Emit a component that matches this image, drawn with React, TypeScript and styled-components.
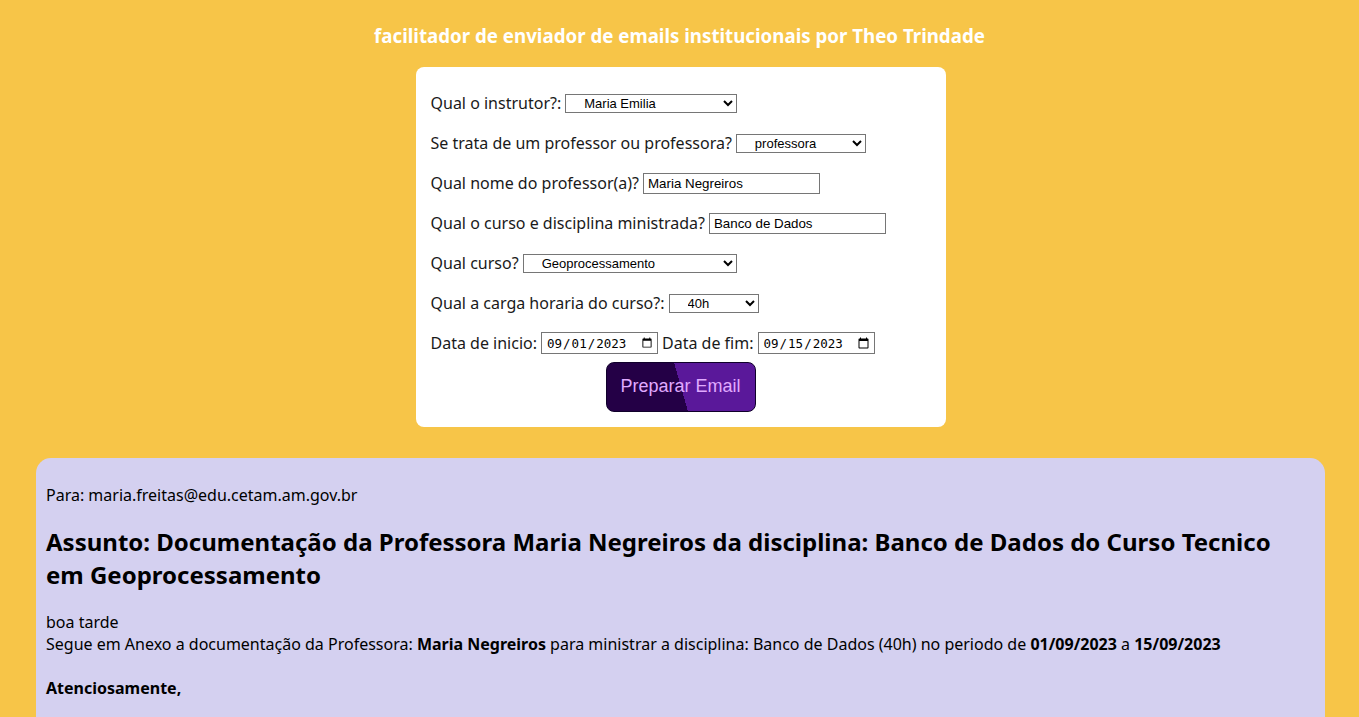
import React from "react";
import styled, { createGlobalStyle } from "styled-components";

const Global = createGlobalStyle`
  html, body {
    margin: 0;
    padding: 0;
    background: #f7c548;
    font-family: "Noto Sans", "Open Sans", sans-serif;
    color: #111;
  }
`;

const Page = styled.div`
  display: flex;
  flex-direction: column;
  align-items: center;
  padding-top: 23px;
`;

const Title = styled.h1`
  margin: 0 0 18px;
  font-size: 18.72px;
  line-height: 26px;
  font-weight: 700;
  color: #ffffff;
  text-align: center;
`;

const Card = styled.form`
  width: 530px;
  box-sizing: border-box;
  margin-left: 2px;
  background: #ffffff;
  border-radius: 8px;
  padding: 24px 15px 15px;
  display: flex;
  flex-direction: column;
  gap: 16px;
`;

const Row = styled.div`
  display: flex;
  align-items: center;
  height: 24px;
  font-size: 16px;
  color: #1a1a1a;
  white-space: nowrap;
`;

const Label = styled.label`
  margin-right: 4px;
`;

const Select = styled.select<{ $w: number }>`
  width: ${(p) => p.$w}px;
  height: 19px;
  box-sizing: border-box;
  font-family: Arial, "Liberation Sans", sans-serif;
  font-size: 13px;
  color: #000;
  padding: 0 0 0 14px;
  border: 1px solid #767676;
  border-radius: 0;
  background: #fff;
`;

const TextInput = styled.input<{ $w: number }>`
  width: ${(p) => p.$w}px;
  height: 21px;
  box-sizing: border-box;
  font-family: Arial, "Liberation Sans", sans-serif;
  font-size: 13.33px;
  padding: 1px 4px;
  border: 1px solid #767676;
  border-radius: 0;
  color: #000;
`;

const DateInput = styled.input`
  width: 117px;
  height: 22px;
  box-sizing: border-box;
  font-family: "DejaVu Sans Mono", "Liberation Mono", monospace;
  font-size: 12.5px;
  padding: 1px 2px 1px 4px;
  border: 1px solid #767676;
  border-radius: 0;
  color: #000;
  margin-right: 4px;
`;

const ButtonRow = styled.div`
  display: flex;
  justify-content: center;
  margin-top: -9px;
`;

const Button = styled.button`
  width: 150px;
  height: 50px;
  padding: 0 0 2px;
  border-radius: 8px;
  border: 1px solid #10002b;
  background: linear-gradient(74deg, #240046 50%, #5a189a 50%);
  color: #e0aaff;
  font-family: Arial, "Liberation Sans", sans-serif;
  font-size: 18px;
  cursor: pointer;
`;

const Panel = styled.section`
  align-self: flex-start;
  margin: 31px 0 0 36px;
  width: 1289px;
  box-sizing: border-box;
  background: #d4d0f0;
  border-radius: 15px;
  padding: 10px 40px 20px 10px;
  color: #000;
`;

const To = styled.p`
  margin: 16px 0;
  font-size: 16px;
`;

const Subject = styled.h2`
  margin: 19px 0 20px;
  font-size: 24px;
  font-weight: 700;
`;

const Body = styled.p`
  margin: 20px 0 16px;
  font-size: 16px;
`;

export default function App() {
  return (
    <>
      <Global />
      <Page>
        <Title>facilitador de enviador de emails institucionais por Theo Trindade</Title>
        <Card onSubmit={(e) => e.preventDefault()}>
          <Row>
            <Label>Qual o instrutor?:</Label>
            <Select $w={172} defaultValue="Maria Emilia">
              <option>Maria Emilia</option>
            </Select>
          </Row>
          <Row>
            <Label>Se trata de um professor ou professora?</Label>
            <Select $w={130} defaultValue="professora">
              <option>professor</option>
              <option>professora</option>
            </Select>
          </Row>
          <Row>
            <Label>Qual nome do professor(a)?</Label>
            <TextInput $w={177} defaultValue="Maria Negreiros" />
          </Row>
          <Row>
            <Label>Qual o curso e disciplina ministrada?</Label>
            <TextInput $w={177} defaultValue="Banco de Dados" />
          </Row>
          <Row>
            <Label>Qual curso?</Label>
            <Select $w={214} defaultValue="Geoprocessamento">
              <option>Geoprocessamento</option>
            </Select>
          </Row>
          <Row>
            <Label>Qual a carga horaria do curso?:</Label>
            <Select $w={90} defaultValue="40h">
              <option>40h</option>
            </Select>
          </Row>
          <Row>
            <Label>Data de inicio:</Label>
            <DateInput type="date" defaultValue="2023-09-01" />
            <Label>Data de fim:</Label>
            <DateInput type="date" defaultValue="2023-09-15" />
          </Row>
          <ButtonRow>
            <Button type="submit">Preparar Email</Button>
          </ButtonRow>
        </Card>
        <Panel>
          <To>Para: maria.freitas@edu.cetam.am.gov.br</To>
          <Subject>
            Assunto: Documentação da Professora Maria Negreiros da disciplina: Banco de Dados do Curso Tecnico em Geoprocessamento
          </Subject>
          <Body>
            boa tarde
            <br />
            Segue em Anexo a documentação da Professora: <b>Maria Negreiros</b> para ministrar a disciplina: Banco de
            Dados (40h) no periodo de <b>01/09/2023</b> a <b>15/09/2023</b>
            <br />
            <br />
            <b>Atenciosamente,</b>
          </Body>
        </Panel>
      </Page>
    </>
  );
}
